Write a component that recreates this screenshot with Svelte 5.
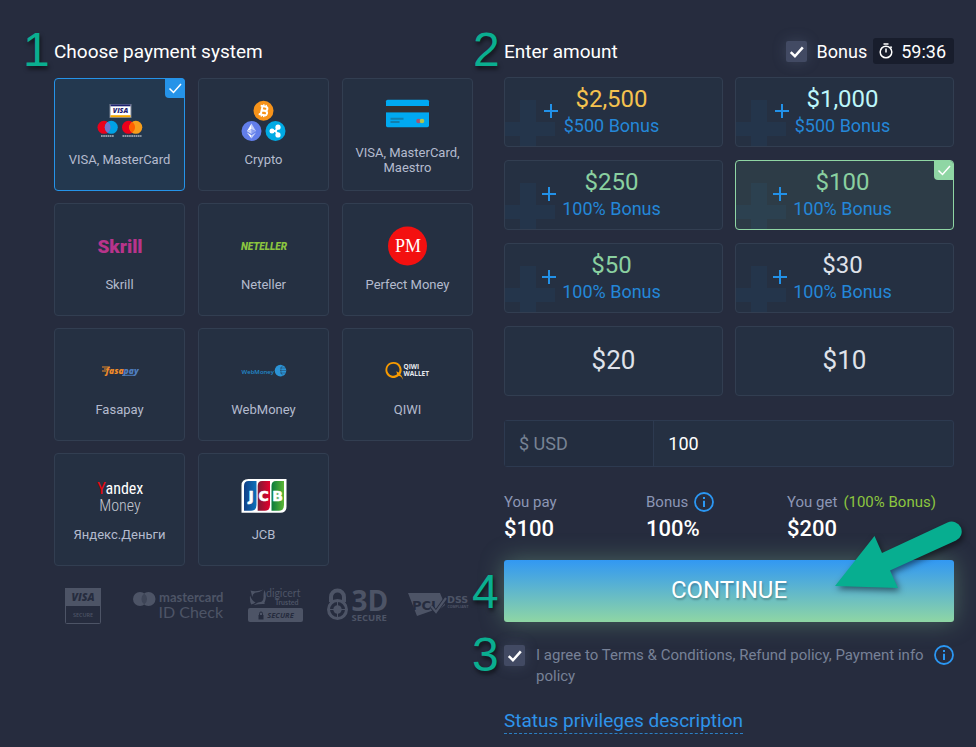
<script>
  const systems = [
    { id: 'visa', label: 'VISA, MasterCard' },
    { id: 'crypto', label: 'Crypto' },
    { id: 'maestro', label: 'VISA, MasterCard, Maestro' },
    { id: 'skrill', label: 'Skrill' },
    { id: 'neteller', label: 'Neteller' },
    { id: 'perfect', label: 'Perfect Money' },
    { id: 'fasapay', label: 'Fasapay' },
    { id: 'webmoney', label: 'WebMoney' },
    { id: 'qiwi', label: 'QIWI' },
    { id: 'yandex', label: 'Яндекс.Деньги' },
    { id: 'jcb', label: 'JCB' }
  ];

  const amounts = [
    { value: 2500, text: '$2,500', bonus: '$500 Bonus', tone: 'gold' },
    { value: 1000, text: '$1,000', bonus: '$500 Bonus', tone: 'ice' },
    { value: 250, text: '$250', bonus: '100% Bonus', tone: 'green' },
    { value: 100, text: '$100', bonus: '100% Bonus', tone: 'green' },
    { value: 50, text: '$50', bonus: '100% Bonus', tone: 'green' },
    { value: 30, text: '$30', bonus: '100% Bonus', tone: 'plain' },
    { value: 20, text: '$20', bonus: '', tone: 'plain' },
    { value: 10, text: '$10', bonus: '', tone: 'plain' }
  ];

  let system = $state('visa');
  let amount = $state('100');
  let withBonus = $state(true);
  let agreed = $state(true);

  let pay = $derived(Number(amount) || 0);
  let percent = $derived(!withBonus || pay < 30 ? 0 : pay >= 1000 ? Math.round(50000 / pay) : 100);
  let total = $derived(Math.round(pay * (1 + percent / 100)));
</script>

{#snippet tick()}
  <svg class="tick" viewBox="0 0 20 20" aria-hidden="true"><path d="M4.5 10.5l4 4L16 6" /></svg>
{/snippet}

{#snippet info()}
  <svg class="info" viewBox="0 0 20 20" aria-hidden="true">
    <circle cx="10" cy="10" r="9" fill="none" stroke="#2b97f3" stroke-width="1.8" />
    <path d="M9 5h2v2H9zM9 8.7h2V15H9z" fill="#2b97f3" />
  </svg>
{/snippet}

{#snippet logo(id)}
  <svg class="logo" viewBox="0 0 48 44" aria-hidden="true">
    {#if id === 'visa'}
      <rect x="13.5" y="6" width="22" height="14" fill="#7d8495" />
      <rect x="14.5" y="7" width="20" height="12" fill="#fff" />
      <rect x="14.5" y="6.5" width="20" height="1.8" fill="#1d2270" />
      <rect x="14.5" y="17.2" width="20" height="2" fill="#f5a800" />
      <text x="24.5" y="15.4" text-anchor="middle" font-family="Open Sans" font-size="7" font-weight="800" font-style="italic" fill="#1d2270">VISA</text>
      <circle cx="8" cy="29.3" r="6.5" fill="#eb001b" />
      <circle cx="15.3" cy="29.3" r="6.5" fill="#00a2e5" />
      <path d="M11.65 23.9a6.5 6.5 0 0 1 0 10.8a6.5 6.5 0 0 1 0-10.8z" fill="#7375cf" />
      <circle cx="32.5" cy="29.3" r="6.5" fill="#eb001b" />
      <circle cx="39.8" cy="29.3" r="6.5" fill="#f79e1b" />
      <path d="M36.15 23.9a6.5 6.5 0 0 1 0 10.8a6.5 6.5 0 0 1 0-10.8z" fill="#ff5f00" />
      <path d="M5 38h13M26.5 38h19" stroke="#d3d7df" stroke-width="1.4" stroke-dasharray="1.7 .5" opacity=".8" />
    {:else if id === 'crypto'}
      <circle cx="23.5" cy="12.7" r="10" fill="#f7931a" />
      <g transform="rotate(13 23.5 12.7)" fill="none" stroke="#fff" stroke-width="2">
        <path d="M19.6 8.4h5.2c2.8 0 2.8 4.1 0 4.1h-3.2h3.7c3 0 3 4.5 0 4.5h-5.7M21.6 8.4V17" />
        <path d="M22.6 6.3v2M25 6.3v2M22.6 17v2M25 17v2" stroke-width="1.3" />
      </g>
      <circle cx="11.5" cy="33" r="10" fill="#627eea" />
      <path d="M11.5 25.6v5.7l4.6 2z" fill="#c3cff8" /><path d="M11.5 25.6l-4.6 7.7l4.6-2z" fill="#fff" />
      <path d="M11.5 31.6v4.3l4.6-2.6z" fill="#8ca0f0" /><path d="M6.9 33.3l4.6 2.6v-4.3z" fill="#c9d3fa" />
      <path d="M6.9 34.5l4.6 6v-3.3z" fill="#fff" /><path d="M11.5 37.2v3.3l4.6-6z" fill="#c3cff8" />
      <circle cx="35.5" cy="33" r="10" fill="#00aae4" />
      <path d="M32 33h3.6l2.3-3.7M35.6 33l2.3 3.7" fill="none" stroke="#fff" stroke-width="2" />
      <circle cx="32" cy="33" r="2.5" fill="#fff" /><circle cx="38" cy="29.2" r="2.6" fill="#fff" /><circle cx="38" cy="36.9" r="2.6" fill="#fff" />
    {:else if id === 'maestro'}
      <rect x="2" y="8.7" width="43" height="27.5" rx="1.6" fill="#00a9f1" />
      <rect x="2" y="15" width="43" height="6.4" fill="#332f31" />
      <path d="M6.5 27.8h13M6.5 31h9" stroke="#117fae" stroke-width="2" />
      <circle cx="34.5" cy="30" r="2.3" fill="#a8546d" /><circle cx="38" cy="30" r="2.3" fill="#b2c44e" />
    {:else if id === 'skrill'}
      <text x="24" y="29.8" text-anchor="middle" font-family="Roboto" font-size="19" font-weight="900" fill="#b8348b">Skrill</text>
    {:else if id === 'neteller'}
      <text x="24" y="26.6" text-anchor="middle" font-family="Roboto" font-size="10" font-weight="900" font-style="italic" fill="#8bc53f">NETELLER</text>
    {:else if id === 'perfect'}
      <circle cx="23.5" cy="23" r="19.5" fill="#f31010" />
      <text x="24" y="29" text-anchor="middle" font-family="Liberation Serif" font-size="18" fill="#fff">PM</text>
    {:else if id === 'fasapay'}
      <text x="9.5" y="26" font-family="Open Sans" font-size="8.5" font-weight="800" font-style="italic" fill="#ee8a2a">fasa<tspan fill="#4f7dbd">pay</tspan></text>
      <path d="M6 19h8M8 21h4M6 23h4" stroke="#ee8a2a" stroke-width="1" />
      <path d="M26 27.3h13l1-2" fill="none" stroke="#4f7dbd" stroke-width="1" />
    {:else if id === 'webmoney'}
      <text x="1.5" y="25.5" font-family="Open Sans" font-size="6" font-weight="600" fill="#2188ca">WebMoney</text>
      <circle cx="40.5" cy="22.6" r="5.8" fill="#2b93d6" />
      <path d="M42.500 17.500q-3.500 4.500 0 10M40 20h6M40 22.500h6.500M40 25h6" fill="none" stroke="#253042" stroke-width=".6" opacity=".7" />
    {:else if id === 'qiwi'}
      <path d="M9.6 14a8 8 0 1 0 5.1 14c2 .2 2.8.6 4.3 3.8c-.5-2.8-1-4-2.7-5.4a8 8 0 0 0-6.7-12.4zM9.6 15.700a6 6 0 0 1 5.200 8.800l-2.500-1.200l.8 3a6 6 0 1 1-3.500-10.600z" fill="#f79a00" fill-rule="evenodd" />
      <text x="19.5" y="20.6" font-family="Open Sans" font-size="6.5" font-weight="700" fill="#e8eaf0">QIWI</text>
      <text x="19.5" y="28" font-family="Open Sans" font-size="6.5" font-weight="700" fill="#e8eaf0">WALLET</text>
    {:else if id === 'yandex'}
      <text x="1" y="20.5" font-family="Roboto Condensed, Liberation Sans Narrow, Noto Sans" font-size="17" fill="#e8070e">Y</text>
      <text x="9.5" y="20.5" font-family="Roboto Condensed, Liberation Sans Narrow, Noto Sans" font-size="16" fill="#fff">andex</text>
      <text x="24" y="38" text-anchor="middle" font-family="Roboto Condensed, Liberation Sans Narrow, Noto Sans" font-size="16" font-weight="300" fill="#c3c7cf">Money</text>
    {:else}
      <defs>
        <linearGradient id="jcb-blue"><stop stop-color="#123f86" /><stop offset="1" stop-color="#0a72bb" /></linearGradient>
        <linearGradient id="jcb-red"><stop stop-color="#7d1a33" /><stop offset="1" stop-color="#e4002d" /></linearGradient>
        <linearGradient id="jcb-green"><stop stop-color="#087b3c" /><stop offset="1" stop-color="#5db535" /></linearGradient>
      </defs>
      <path d="M8.5 6H46.5V33.5Q46.5 39.8 40.5 39.8H1.5V12.5Q1.5 6 8.5 6z" fill="#fff" />
      <path d="M8.5 8H16.5V32Q16.5 37.8 11 37.8H4V13Q4 8 8.5 8z" fill="url(#jcb-blue)" />
      <path d="M22 8H30V32Q30 37.8 25 37.8H17.7V13Q17.7 8 22 8z" fill="url(#jcb-red)" />
      <path d="M36 8H44V32Q44 37.8 39 37.8H31.5V13Q31.5 8 36 8z" fill="url(#jcb-green)" />
      <g font-family="DejaVu Sans" font-size="14" font-weight="700" fill="#fff" stroke="#fff" stroke-width=".6" text-anchor="middle">
        <text x="11" y="27.6">J</text><text x="23.7" y="27.6">C</text><text x="37.5" y="27.6">B</text>
      </g>
    {/if}
  </svg>
{/snippet}

<main>
  <section>
    <header>
      <h2>Choose payment system</h2>
      <span class="step step-head">1</span>
    </header>
    <div class="systems">
      {#each systems as s (s.id)}
        <button type="button" class="system" class:active={system === s.id} aria-pressed={system === s.id} onclick={() => (system = s.id)}>
          {@render logo(s.id)}
          <span>{s.label}</span>
          {#if system === s.id}<i class="corner">{@render tick()}</i>{/if}
        </button>
      {/each}
    </div>

    <div class="trust" aria-hidden="true">
      <svg width="48" height="38" viewBox="0 0 48 38">
        <rect x=".5" y="1.5" width="35" height="35" rx="1" fill="none" stroke="#4d5466" />
        <rect x="0" y="1" width="36" height="18" />
        <text x="18" y="14" text-anchor="middle" font-family="Open Sans" font-size="10.5" font-weight="800" font-style="italic" fill="#262c3e">VISA</text>
        <text x="18" y="29.5" text-anchor="middle" font-family="Open Sans" font-size="5.5" font-weight="600">SECURE</text>
      </svg>
      <svg width="95" height="38" viewBox="0 0 95 38">
        <circle cx="7" cy="12" r="7" /><circle cx="15.5" cy="12" r="7" /><path d="M11.25 6.4a7 7 0 0 1 0 11.2a7 7 0 0 1 0-11.2z" fill="#3e4557" />
        <text x="26" y="15" font-family="Lato" font-size="13" font-weight="700">mastercard</text>
        <text x="25.5" y="31" font-family="Lato" font-size="16">ID Check</text>
      </svg>
      <svg width="59" height="38" viewBox="0 0 59 38">
        <path d="M2.500 3.500Q8 5.500 15.500 2.500Q12 5.500 7 5.700Q4.500 7 4.200 10Q3.500 6 2.500 3.500zM16.500 3Q19 9 17 14.500Q15.500 17 17.500 17Q11.500 16.500 5.500 18Q10 15 13.500 14.800Q16 13 15.500 9Q15.500 5.500 16.500 3zM3.200 17.500Q1.500 14 2 8.500Q4 14 7.500 15.500Q5.500 17 3.200 17.500z" />
        <text x="18" y="10" font-family="Lato" font-size="10.5">digicert</text>
        <text x="27" y="18" font-family="Lato" font-size="7" font-weight="700">Trusted</text>
        <rect x="0" y="21" width="55" height="14" rx="2" />
        <path d="M10.5 28h5v4.5h-5z" fill="#262c3e" /><path d="M11.5 28v-1.5a1.5 1.5 0 0 1 3 0V28" fill="none" stroke="#262c3e" />
        <text x="32.5" y="31" text-anchor="middle" font-family="Open Sans" font-size="7.5" font-weight="700" font-style="italic" fill="#262c3e">SECURE</text>
      </svg>
      <svg width="61" height="38" viewBox="0 0 61 38">
        <path d="M4 15V10a6.5 6.5 0 0 1 13 0v5" fill="none" stroke="#4d5466" stroke-width="4" />
        <circle cx="10.5" cy="22.5" r="9" fill="none" stroke="#4d5466" stroke-width="3" />
        <circle cx="10.5" cy="22.5" r="4.2" /><path d="M10.5 14v17M2 22.5h17" stroke="#4d5466" />
        <text x="24.5" y="24" font-family="Open Sans" font-size="28" font-weight="700">3D</text>
        <text x="24.5" y="34" font-family="Open Sans" font-size="9.5" font-weight="700">SECURE</text>
      </svg>
      <svg width="61" height="38" viewBox="0 0 61 38">
        <path d="M0 6h32l5 12l-7 6l-4-1L9 29z" />
        <text x="4" y="22.500" font-family="DejaVu Sans" font-size="13" font-weight="700" fill="#262c3e">PCI</text>
        <path d="M23 19l5 6l10-14" fill="none" stroke="#262c3e" stroke-width="4" /><path d="M23 19l5 6l10-14" fill="none" stroke="#4d5466" stroke-width="2.2" />
        <text x="39" y="16" font-family="DejaVu Sans" font-size="9.5" font-weight="700">DSS</text>
        <text x="39.5" y="20.5" font-family="Open Sans" font-size="3.5" font-weight="700">COMPLIANT</text>
      </svg>
    </div>
  </section>

  <section>
    <header>
      <h2>Enter amount</h2>
      <span class="step step-head">2</span>
      <label class="bonus-toggle">
        <span class="box"><input type="checkbox" bind:checked={withBonus} />{@render tick()}</span>
        Bonus
      </label>
      <span class="timer">
        <svg width="16" height="16" viewBox="0 0 16 16" fill="none" stroke="#fff" stroke-width="1.5" aria-hidden="true">
          <circle cx="8" cy="9" r="5.8" /><path d="M5.5 1h5M8 5.5V9.5M12.5 3.5l1.2 1.2" />
        </svg>
        59:36
      </span>
    </header>

    <div class="amounts">
      {#each amounts as a (a.value)}
        <button type="button" class="amount {a.tone}" class:active={pay === a.value} aria-pressed={pay === a.value} onclick={() => (amount = String(a.value))}>
          {#if a.bonus}
            <svg class="ghost" viewBox="0 0 50 50" aria-hidden="true"><path d="M15 0h16v22h19v14H31v14H15V36H0V22h15z" /></svg>
            <span class="stack">
              <svg class="plus" viewBox="0 0 14 14" aria-hidden="true"><path d="M7 0v14M0 7h14" /></svg>
              <strong>{a.text}</strong>
              <em>{a.bonus}</em>
            </span>
          {:else}
            <strong class="single">{a.text}</strong>
          {/if}
          {#if pay === a.value}<i class="corner">{@render tick()}</i>{/if}
        </button>
      {/each}
    </div>

    <div class="field">
      <input class="currency" aria-label="Currency" value="$ USD" readonly />
      <input class="sum" aria-label="Amount" inputmode="numeric" bind:value={amount} />
    </div>

    <dl class="summary">
      <div><dt>You pay</dt><dd>${pay}</dd></div>
      <div><dt>Bonus {@render info()}</dt><dd>{percent}%</dd></div>
      <div><dt>You get <b>({percent}% Bonus)</b></dt><dd>${total}</dd></div>
    </dl>

    <div class="submit">
      <button type="button" class="continue" disabled={!agreed}>CONTINUE</button>
      <span class="step step-side">4</span>
      <svg class="arrow" viewBox="0 0 130 56" aria-hidden="true">
        <path d="M1 53L40.500 3L48 20L113.500-10.400A9.600 9.600 0 0 1 122 7.600L56 37.500L64 55z" />
      </svg>
    </div>

    <div class="agree">
      <label>
        <span class="box"><input type="checkbox" bind:checked={agreed} />{@render tick()}</span>
        <span>I agree to Terms &amp; Conditions, Refund policy, Payment info policy</span>
      </label>
      {@render info()}
      <span class="step step-agree">3</span>
    </div>

    <a class="status" href="#status">Status privileges description</a>
  </section>
</main>

<style>
  :global(body) {
    background: #262c3e;
  }
  main {
    display: grid;
    grid-template-columns: 419fr 450fr;
    column-gap: 31px;
    align-items: start;
    padding: 36px 22px 12px 54px;
    font-family: Roboto, 'Liberation Sans', sans-serif;
    color: #fff;
  }
  button,
  input {
    font-family: inherit;
    margin: 0;
  }
  button {
    cursor: pointer;
  }
  header {
    position: relative;
    display: flex;
    align-items: center;
    height: 30px;
    margin-bottom: 12px;
  }
  h2 {
    margin: 0;
    flex: 1;
    font-size: 19px;
    font-weight: 400;
  }
  .step {
    position: absolute;
    font-family: 'Liberation Sans', Arial, sans-serif;
    font-size: 48px;
    line-height: 48px;
    color: #0aae90;
    text-shadow: 1px 3px 4px rgba(0, 0, 0, 0.6);
  }
  .step-head {
    left: -31px;
    top: -10px;
  }
  .step-side {
    left: -32px;
    top: 8px;
  }
  .step-agree {
    left: -32px;
    top: -14px;
  }
  .systems {
    display: grid;
    grid-template-columns: repeat(3, 1fr);
    gap: 12px 13px;
  }
  .system {
    position: relative;
    display: flex;
    flex-direction: column;
    align-items: center;
    justify-content: center;
    gap: 10px;
    height: 113px;
    padding: 0 6px 4px;
    border: 1px solid #323e51;
    border-radius: 4px;
    background: #253042;
    color: #b4bbce;
    font-size: 13px;
    line-height: 15px;
  }
  .system.active {
    border-color: #2593e8;
    background: #23384f;
  }
  .logo {
    width: 48px;
    height: 44px;
    flex: none;
    overflow: visible;
  }
  .corner {
    position: absolute;
    top: -1px;
    right: -1px;
    width: 20px;
    height: 20px;
    border-radius: 0 4px 0 4px;
    background: #2593e8;
  }
  .corner .tick {
    width: 20px;
    height: 20px;
    display: block;
    stroke-width: 1.5;
  }
  .tick {
    fill: none;
    stroke: #fff;
    stroke-width: 2.4;
  }
  .trust {
    display: flex;
    gap: 20px;
    padding: 21px 0 0 11px;
  }
  .trust svg {
    fill: #4d5466;
    flex: none;
    overflow: visible;
  }
  .box {
    display: grid;
    flex: none;
    width: 21px;
    height: 21px;
    border-radius: 2px;
    background: #424a63;
    box-shadow: 0 0 14px rgba(120, 135, 170, 0.25);
  }
  .box input {
    grid-area: 1 / 1;
    appearance: none;
    cursor: pointer;
  }
  .box .tick {
    grid-area: 1 / 1;
    width: 21px;
    height: 21px;
    pointer-events: none;
    visibility: hidden;
  }
  .box input:checked + .tick {
    visibility: visible;
  }
  .bonus-toggle {
    display: flex;
    align-items: center;
    gap: 10px;
    margin-right: 6px;
    font-size: 18px;
  }
  .timer {
    display: flex;
    align-items: center;
    gap: 7px;
    height: 26px;
    padding: 0 8px 0 5px;
    border-radius: 3px;
    background: #181d2c;
    font-size: 18px;
  }
  .amounts {
    display: grid;
    grid-template-columns: 1fr 1fr;
    gap: 13px 12px;
    margin-top: -1px;
  }
  .amount {
    position: relative;
    display: flex;
    align-items: center;
    justify-content: center;
    height: 70px;
    padding: 0;
    border: 1px solid #323e51;
    border-radius: 4px;
    background: #253042;
    overflow: hidden;
    color: #dfe2ea;
  }
  .amount.active {
    border-color: #8fd6a4;
    background: #2d3c47;
  }
  .amount .corner {
    background: #8fd6a4;
  }
  .ghost {
    position: absolute;
    left: 0;
    top: 22px;
    width: 50px;
    height: 50px;
    fill: #24354b;
  }
  .active .ghost {
    fill: #2c4150;
  }
  .stack {
    position: relative;
    display: flex;
    flex-direction: column;
    align-items: center;
    margin-right: 4px;
  }
  .plus {
    position: absolute;
    right: calc(100% + 6px);
    top: 19px;
    width: 14px;
    height: 14px;
    stroke: #2291e8;
    stroke-width: 2;
  }
  .amount strong {
    font-size: 24px;
    font-weight: 400;
    line-height: 28px;
  }
  .amount .single {
    padding-bottom: 2px;
    font-size: 26px;
  }
  .amount em {
    font-style: normal;
    font-size: 18px;
    line-height: 26px;
    color: #2487d8;
  }
  .gold strong {
    color: #f5c24f;
  }
  .ice strong {
    color: #bdf6fa;
  }
  .green strong {
    color: #8ad0a0;
  }
  .field {
    display: grid;
    grid-template-columns: 1fr 2fr;
    height: 45px;
    margin-top: 24px;
    border: 1px solid #2d3a50;
    border-radius: 3px;
    background: #253042;
  }
  .field input {
    min-width: 0;
    padding: 0 14px;
    border: 0;
    background: none;
    outline: none;
    font-size: 18px;
    color: #fff;
  }
  .field .currency {
    background: #232d3f;
    border-right: 1px solid #2d3a50;
    color: #778394;
  }
  .summary {
    display: grid;
    grid-template-columns: 142px 141px 1fr;
    margin: 24px 0 17px;
  }
  dt {
    display: flex;
    align-items: center;
    gap: 6px;
    height: 22px;
    font-size: 15px;
    color: #8c96b5;
    white-space: nowrap;
  }
  dt b {
    font-weight: 400;
    color: #8cc63f;
  }
  dd {
    margin: 2px 0 0;
    font-size: 22px;
    font-weight: 500;
    line-height: 28px;
  }
  .info {
    width: 20px;
    height: 20px;
    flex: none;
  }
  .submit {
    position: relative;
  }
  .continue {
    display: block;
    width: 100%;
    height: 62px;
    padding: 0 0 2px;
    border: 0;
    border-radius: 3px;
    background: linear-gradient(#3298f3, #8fd6a4);
    box-shadow: 0 0 24px rgba(143, 214, 164, 0.35);
    color: #fff;
    font-size: 24px;
    text-shadow: 1px 2px 2px rgba(0, 0, 0, 0.25);
  }
  .arrow {
    position: absolute;
    right: -10px;
    top: -27px;
    width: 130px;
    height: 56px;
    overflow: visible;
    fill: #07ae90;
    filter: drop-shadow(2px 3px 3px rgba(0, 0, 0, 0.5));
    pointer-events: none;
  }
  .agree {
    position: relative;
    display: flex;
    align-items: flex-start;
    gap: 10px;
    margin-top: 23px;
  }
  .agree label {
    flex: 1;
    display: flex;
    gap: 11px;
    font-size: 15px;
    line-height: 21px;
    color: #778197;
  }
  .status {
    display: inline-block;
    margin-top: 22px;
    border-bottom: 1px dashed #2b7fc4;
    font-size: 19px;
    line-height: 24px;
    color: #2f94ea;
    text-decoration: none;
  }
</style>
